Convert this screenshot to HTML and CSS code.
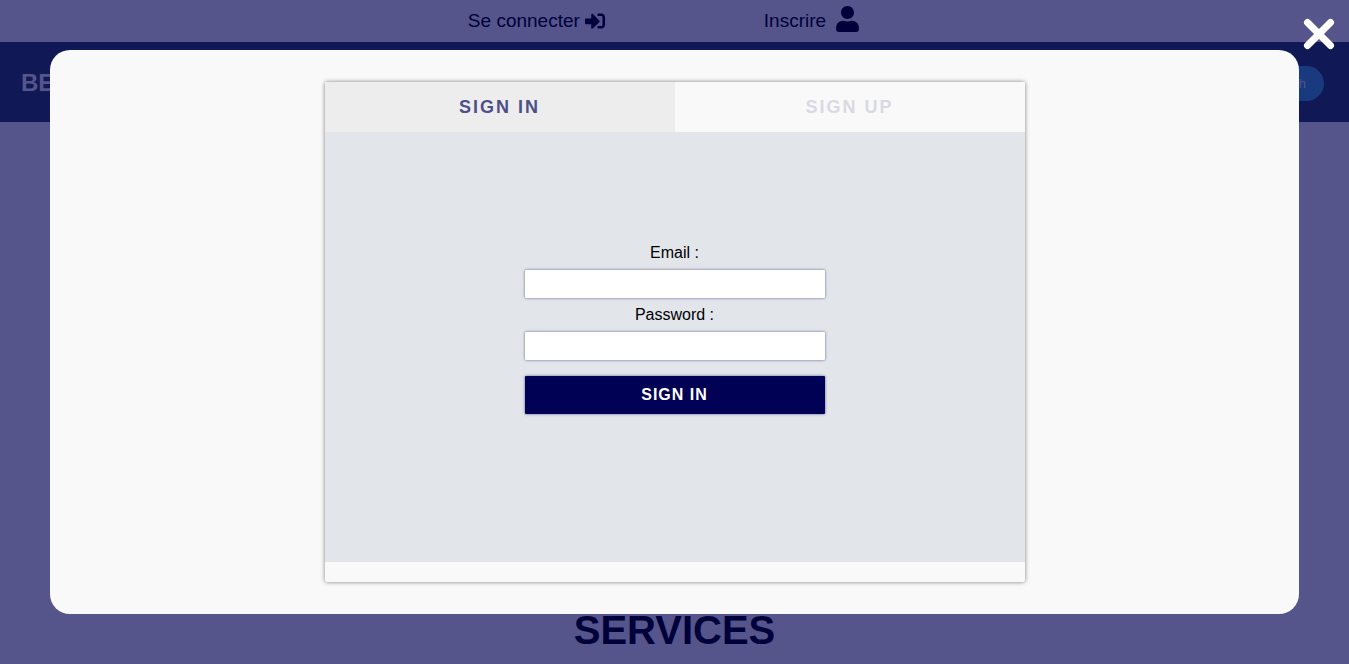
FILE: index.html
```html
<!DOCTYPE html>
<html lang="fr">
<head>
<meta charset="utf-8">
<title>Sign in</title>
<link rel="stylesheet" href="styles.css">
</head>
<body>
<header>
  <div class="topbar">
    <a class="top-link" href="#">Se connecter
      <svg class="icon-login" viewBox="0 0 512 512" aria-hidden="true"><path d="M416 448h-84c-6.600 0-12-5.400-12-12v-40c0-6.600 5.400-12 12-12h84c17.700 0 32-14.300 32-32V160c0-17.700-14.300-32-32-32h-84c-6.600 0-12-5.400-12-12V76c0-6.600 5.400-12 12-12h84c53 0 96 43 96 96v192c0 53-43 96-96 96zm-47-201L201 79c-15-15-41-4.500-41 17v96H24c-13.300 0-24 10.700-24 24v96c0 13.300 10.700 24 24 24h136v96c0 21.500 26 32 41 17l168-168c9.300-9.400 9.300-24.600 0-34z"/></svg>
    </a>
    <a class="top-link top-link-wide" href="#">Inscrire
      <svg class="icon-user" viewBox="0 0 448 512" aria-hidden="true"><path d="M224 256c70.700 0 128-57.300 128-128S294.700 0 224 0 96 57.300 96 128s57.300 128 128 128zm89.600 32h-16.700c-22.200 10.200-46.900 16-72.900 16s-50.600-5.800-72.900-16h-16.700C60.200 288 0 348.200 0 422.400V464c0 26.500 21.500 48 48 48h352c26.500 0 48-21.500 48-48v-41.600c0-74.200-60.200-134.400-134.400-134.400z"/></svg>
    </a>
  </div>
  <nav class="navbar">
    <a class="brand" href="#">BE</a>
    <button class="search-button" type="button">Search</button>
  </nav>
</header>
<main>
  <div class="hero"></div>
  <h1 class="section-title">SERVICES</h1>
</main>

<div class="overlay">
  <div class="modal" role="dialog" aria-label="Sign in">
    <div class="card">
      <div class="tabs" role="tablist">
        <button class="tab tab-active" type="button" role="tab" aria-selected="true">SIGN IN</button>
        <button class="tab" type="button" role="tab" aria-selected="false">SIGN UP</button>
      </div>
      <div class="panel">
        <form class="form">
          <label for="email">Email :</label>
          <input id="email" type="email">
          <label for="password">Password :</label>
          <input id="password" type="password">
          <button class="submit" type="submit">SIGN IN</button>
        </form>
      </div>
    </div>
  </div>
  <button class="close" type="button" aria-label="Close">
    <svg viewBox="0 0 32 32" aria-hidden="true"><path d="M4.500 4.500l23 23M27.500 4.500l-23 23"/></svg>
  </button>
</div>
</body>
</html>
```

FILE: styles.css
```css
* {
  box-sizing: border-box;
}

body {
  margin: 0;
  overflow: hidden;
  background: #55558c;
  color: #00003b;
  font-family: "Liberation Sans", Arial, sans-serif;
}

button {
  border: 0;
  font-family: inherit;
}

.topbar {
  display: flex;
  justify-content: center;
  align-items: center;
  gap: 159px;
  height: 42px;
  padding-right: 22px;
}

.top-link {
  display: flex;
  align-items: center;
  gap: 5px;
  color: #00003b;
  font-size: 19px;
  text-decoration: none;
}

.top-link-wide {
  gap: 10px;
}

.top-link svg {
  fill: #00003b;
}

.icon-login {
  width: 20px;
  height: 20px;
}

.icon-user {
  width: 23px;
  height: 26px;
  margin-bottom: 4px;
}

.navbar {
  display: flex;
  justify-content: space-between;
  align-items: center;
  height: 80px;
  padding: 2px 25px 0 21px;
  background: #101855;
}

.brand {
  color: #55558c;
  font-size: 24px;
  font-weight: bold;
  text-decoration: none;
}

.search-button {
  height: 35px;
  padding: 0 18px;
  border-radius: 18px;
  background: #1a3a80;
  color: #55558c;
  font-size: 13px;
}

.hero {
  height: 485px;
}

.section-title {
  margin: 0;
  font-size: 40px;
  line-height: 46px;
  text-align: center;
}

.overlay {
  position: fixed;
  inset: 0;
  display: flex;
  padding: 50px;
}

.modal {
  flex: 1;
  display: flex;
  justify-content: center;
  align-items: center;
  border-radius: 20px;
  background: #f9f9f9;
}

.card {
  width: 700px;
  padding-bottom: 20px;
  border-radius: 2px;
  box-shadow: 0 0 4px rgba(0, 0, 0, 0.5);
}

.tabs {
  display: grid;
  grid-template-columns: 1fr 1fr;
}

.tab {
  height: 50px;
  background: #f9f9f9;
  color: #d9d9e5;
  font-size: 18px;
  font-weight: bold;
  letter-spacing: 2px;
}

.tab-active {
  background: #ededed;
  color: #4f4f8a;
}

.panel {
  display: flex;
  justify-content: center;
  align-items: center;
  height: 430px;
  background: #e2e6eb;
}

.form {
  display: flex;
  flex-direction: column;
  width: 300px;
  margin-bottom: 44px;
  color: #000;
  font-size: 16px;
  text-align: center;
}

.form label {
  line-height: 34px;
}

.form input {
  height: 28px;
  border: 0;
  border-radius: 1px;
  background: #fff;
  box-shadow: 0 0 3px rgba(0, 0, 85, 0.6);
}

.submit {
  height: 38px;
  margin-top: 16px;
  border-radius: 1px;
  background: #000055;
  box-shadow: 0 0 3px rgba(0, 0, 85, 0.6);
  color: #fff;
  font-size: 16px;
  font-weight: bold;
  letter-spacing: 1px;
}

.close {
  position: absolute;
  top: 18px;
  right: 14px;
  width: 32px;
  height: 32px;
  padding: 0;
  background: none;
}

.close svg {
  display: block;
  fill: none;
  stroke: #fff;
  stroke-width: 7;
  stroke-linecap: round;
}
```
